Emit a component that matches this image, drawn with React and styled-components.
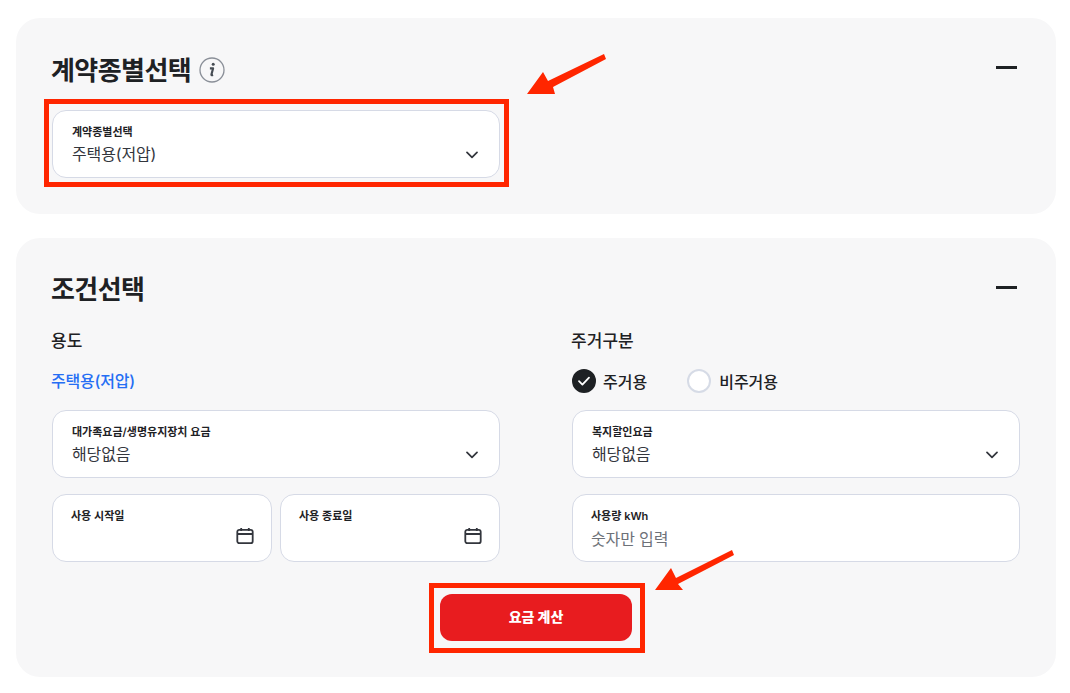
import React from 'react';
import styled, { createGlobalStyle } from 'styled-components';

const GlobalStyle = createGlobalStyle`
  * {
    box-sizing: border-box;
  }
  body {
    margin: 0;
    background: #fff;
    color: #1e2124;
    font-family: Inter, "Noto Sans CJK KR", "Noto Sans", sans-serif;
  }
`;

const Page = styled.div`
  position: relative;
  display: flex;
  flex-direction: column;
  gap: 24px;
  width: 1070px;
  height: 693px;
  padding: 18px 14px 0 16px;
  overflow: hidden;
`;

const Panel = styled.section`
  padding: 36px;
  border-radius: 24px;
  background: #f7f7f8;
`;

const PanelHead = styled.div`
  display: flex;
  align-items: center;
  justify-content: space-between;
  height: 28px;
  margin-bottom: ${(p) => p.$gap}px;
`;

const TitleGroup = styled.div`
  display: flex;
  align-items: center;
  gap: 8px;
`;

const Title = styled.h2`
  margin: ${(p) => p.$lift || 0}px 0 0 -1px;
  font-size: 26px;
  font-weight: 700;
  letter-spacing: -0.55px;
`;

const InfoWrap = styled.span`
  display: flex;
  margin-top: 4px;
`;

const Minus = styled.span`
  display: block;
  width: 21px;
  height: 3px;
  margin: -1px 3px 0 0;
  background: #1e2124;
`;

const Columns = styled.div`
  display: grid;
  grid-template-columns: 448px 448px;
  column-gap: 72px;
`;

const Column = styled.div`
  display: flex;
  flex-direction: column;
`;

const GroupLabel = styled.div`
  height: 24px;
  margin: 0 0 16px -1px;
  font-size: 17px;
  font-weight: 500;
  line-height: 24px;
  letter-spacing: 0.05px;
`;

const UsageText = styled.div`
  height: 24px;
  margin: 0 0 17px -1px;
  color: #256ef4;
  font-size: 16px;
  font-weight: 500;
  line-height: 24px;
  letter-spacing: -0.2px;
`;

const RadioRow = styled.div`
  display: flex;
  align-items: center;
  gap: 40px;
  height: 24px;
  margin-bottom: 17px;
`;

const RadioItem = styled.label`
  display: flex;
  align-items: center;
  gap: ${(p) => (p.$wide ? 8 : 7)}px;
  font-size: 16px;
  font-weight: 500;
`;

const RadioMark = styled.span`
  display: flex;
  align-items: center;
  justify-content: center;
  width: 24px;
  height: 24px;
  border: 2px solid ${(p) => (p.$checked ? '#1e2124' : '#d6dbe6')};
  border-radius: 50%;
  background: ${(p) => (p.$checked ? '#1e2124' : '#fff')};
`;

const FieldStack = styled.div`
  display: flex;
  flex-direction: column;
  gap: 16px;
`;

const FieldRow = styled.div`
  display: grid;
  grid-template-columns: 220px 220px;
  gap: 8px;
`;

const FieldBox = styled.div`
  position: relative;
  height: 68px;
  padding: 13px ${(p) => (p.$tight ? 18 : 19)}px 0;
  border: 1px solid #d6dae6;
  border-radius: 14px;
  background: #fff;
`;

const FieldLabel = styled.div`
  height: 16px;
  font-size: 11px;
  font-weight: 600;
  line-height: 16px;
`;

const FieldValue = styled.div`
  margin-top: 2px;
  font-size: 16px;
  line-height: 24px;
  letter-spacing: -0.15px;
  color: #33363d;
`;

const NumberInput = styled.input`
  display: block;
  width: 100%;
  margin-top: 3px;
  padding: 0;
  border: 0;
  outline: 0;
  background: transparent;
  font: inherit;
  font-size: 16px;
  line-height: 24px;
  letter-spacing: -0.15px;
  &::placeholder {
    color: #6d7178;
    opacity: 1;
  }
`;

const IconSlot = styled.span`
  position: absolute;
  right: ${(p) => p.$right}px;
  top: ${(p) => p.$top}px;
  display: flex;
`;

const ButtonRow = styled.div`
  display: flex;
  justify-content: center;
  margin-top: 32px;
`;

const CalcButton = styled.button`
  width: 192px;
  height: 47px;
  padding: 0 0 4px;
  border: 0;
  border-radius: 12px;
  background: #e81c1f;
  color: #fff;
  font: inherit;
  font-size: 14px;
  font-weight: 800;
`;

const Highlight = styled.div`
  position: absolute;
  left: ${(p) => p.$x}px;
  top: ${(p) => p.$y}px;
  width: ${(p) => p.$w}px;
  height: ${(p) => p.$h}px;
  border: 5px solid #ff2600;
  pointer-events: none;
`;

const ArrowLayer = styled.svg`
  position: absolute;
  left: 0;
  top: 0;
  pointer-events: none;
`;

const InfoIcon = () => (
  <svg width="26" height="26" viewBox="0 0 26 26" fill="none">
    <circle cx="13" cy="13" r="12" stroke="#8a8f98" strokeWidth="1.3" />
    <path d="M14.2 7.2h.01" stroke="#464c53" strokeWidth="3" strokeLinecap="round" />
    <path d="M10.9 11.4h3.2l-1.7 6.2c-.15.6.4.8 1.7.4" stroke="#464c53" strokeWidth="2.1" strokeLinejoin="round" />
  </svg>
);

const Chevron = () => (
  <svg width="12" height="8" viewBox="0 0 12 8" fill="none">
    <path d="M1 1.4 6 6.4l5-5" stroke="#33363d" strokeWidth="1.7" strokeLinecap="round" strokeLinejoin="round" />
  </svg>
);

const CalendarIcon = () => (
  <svg width="18" height="18" viewBox="0 0 18 18" fill="none" stroke="#33363d" strokeWidth="1.8">
    <rect x="1.3" y="2.8" width="15.4" height="13.4" rx="2" />
    <path d="M1.3 7h15.4M5.2 1v3M12.8 1v3" />
  </svg>
);

const SelectField = ({ label, value }) => (
  <FieldBox>
    <FieldLabel>{label}</FieldLabel>
    <FieldValue>{value}</FieldValue>
    <IconSlot $right={21} $top={40}>
      <Chevron />
    </IconSlot>
  </FieldBox>
);

const DateField = ({ label }) => (
  <FieldBox $tight>
    <FieldLabel>{label}</FieldLabel>
    <IconSlot $right={17} $top={32}>
      <CalendarIcon />
    </IconSlot>
  </FieldBox>
);

export default function App() {
  return (
    <Page>
      <GlobalStyle />
      <Panel>
        <PanelHead $gap={28}>
          <TitleGroup>
            <Title>계약종별선택</Title>
            <InfoWrap>
              <InfoIcon />
            </InfoWrap>
          </TitleGroup>
          <Minus />
        </PanelHead>
        <Columns>
          <SelectField label="계약종별선택" value="주택용(저압)" />
        </Columns>
      </Panel>
      <Panel>
        <PanelHead $gap={27}>
          <Title $lift={-2}>조건선택</Title>
          <Minus />
        </PanelHead>
        <Columns>
          <Column>
            <GroupLabel>용도</GroupLabel>
            <UsageText>주택용(저압)</UsageText>
            <FieldStack>
              <SelectField label="대가족요금/생명유지장치 요금" value="해당없음" />
              <FieldRow>
                <DateField label="사용 시작일" />
                <DateField label="사용 종료일" />
              </FieldRow>
            </FieldStack>
          </Column>
          <Column>
            <GroupLabel>주거구분</GroupLabel>
            <RadioRow>
              <RadioItem>
                <RadioMark $checked>
                  <svg width="14" height="12" viewBox="0 0 14 12" fill="none">
                    <path d="M2 6.2 5.4 9.6 12 2.6" stroke="#fff" strokeWidth="1.8" strokeLinecap="round" strokeLinejoin="round" />
                  </svg>
                </RadioMark>
                주거용
              </RadioItem>
              <RadioItem $wide>
                <RadioMark />
                비주거용
              </RadioItem>
            </RadioRow>
            <FieldStack>
              <SelectField label="복지할인요금" value="해당없음" />
              <FieldBox $tight>
                <FieldLabel>사용량 kWh</FieldLabel>
                <NumberInput placeholder="숫자만 입력" />
              </FieldBox>
            </FieldStack>
          </Column>
        </Columns>
        <ButtonRow>
          <CalcButton>요금 계산</CalcButton>
        </ButtonRow>
      </Panel>
      <Highlight $x={44} $y={99} $w={465} $h={88} />
      <Highlight $x={429} $y={583} $w={216} $h={70} />
      <ArrowLayer width="1070" height="693" viewBox="0 0 1070 693">
        <path d="M527 94 543 72 548 81 604 54 606 59 553 87 555 94Z" fill="#ff2600" />
        <path d="M655 590 671 568 676 578 732 550 734 555 678 584 683 590Z" fill="#ff2600" />
      </ArrowLayer>
    </Page>
  );
}
